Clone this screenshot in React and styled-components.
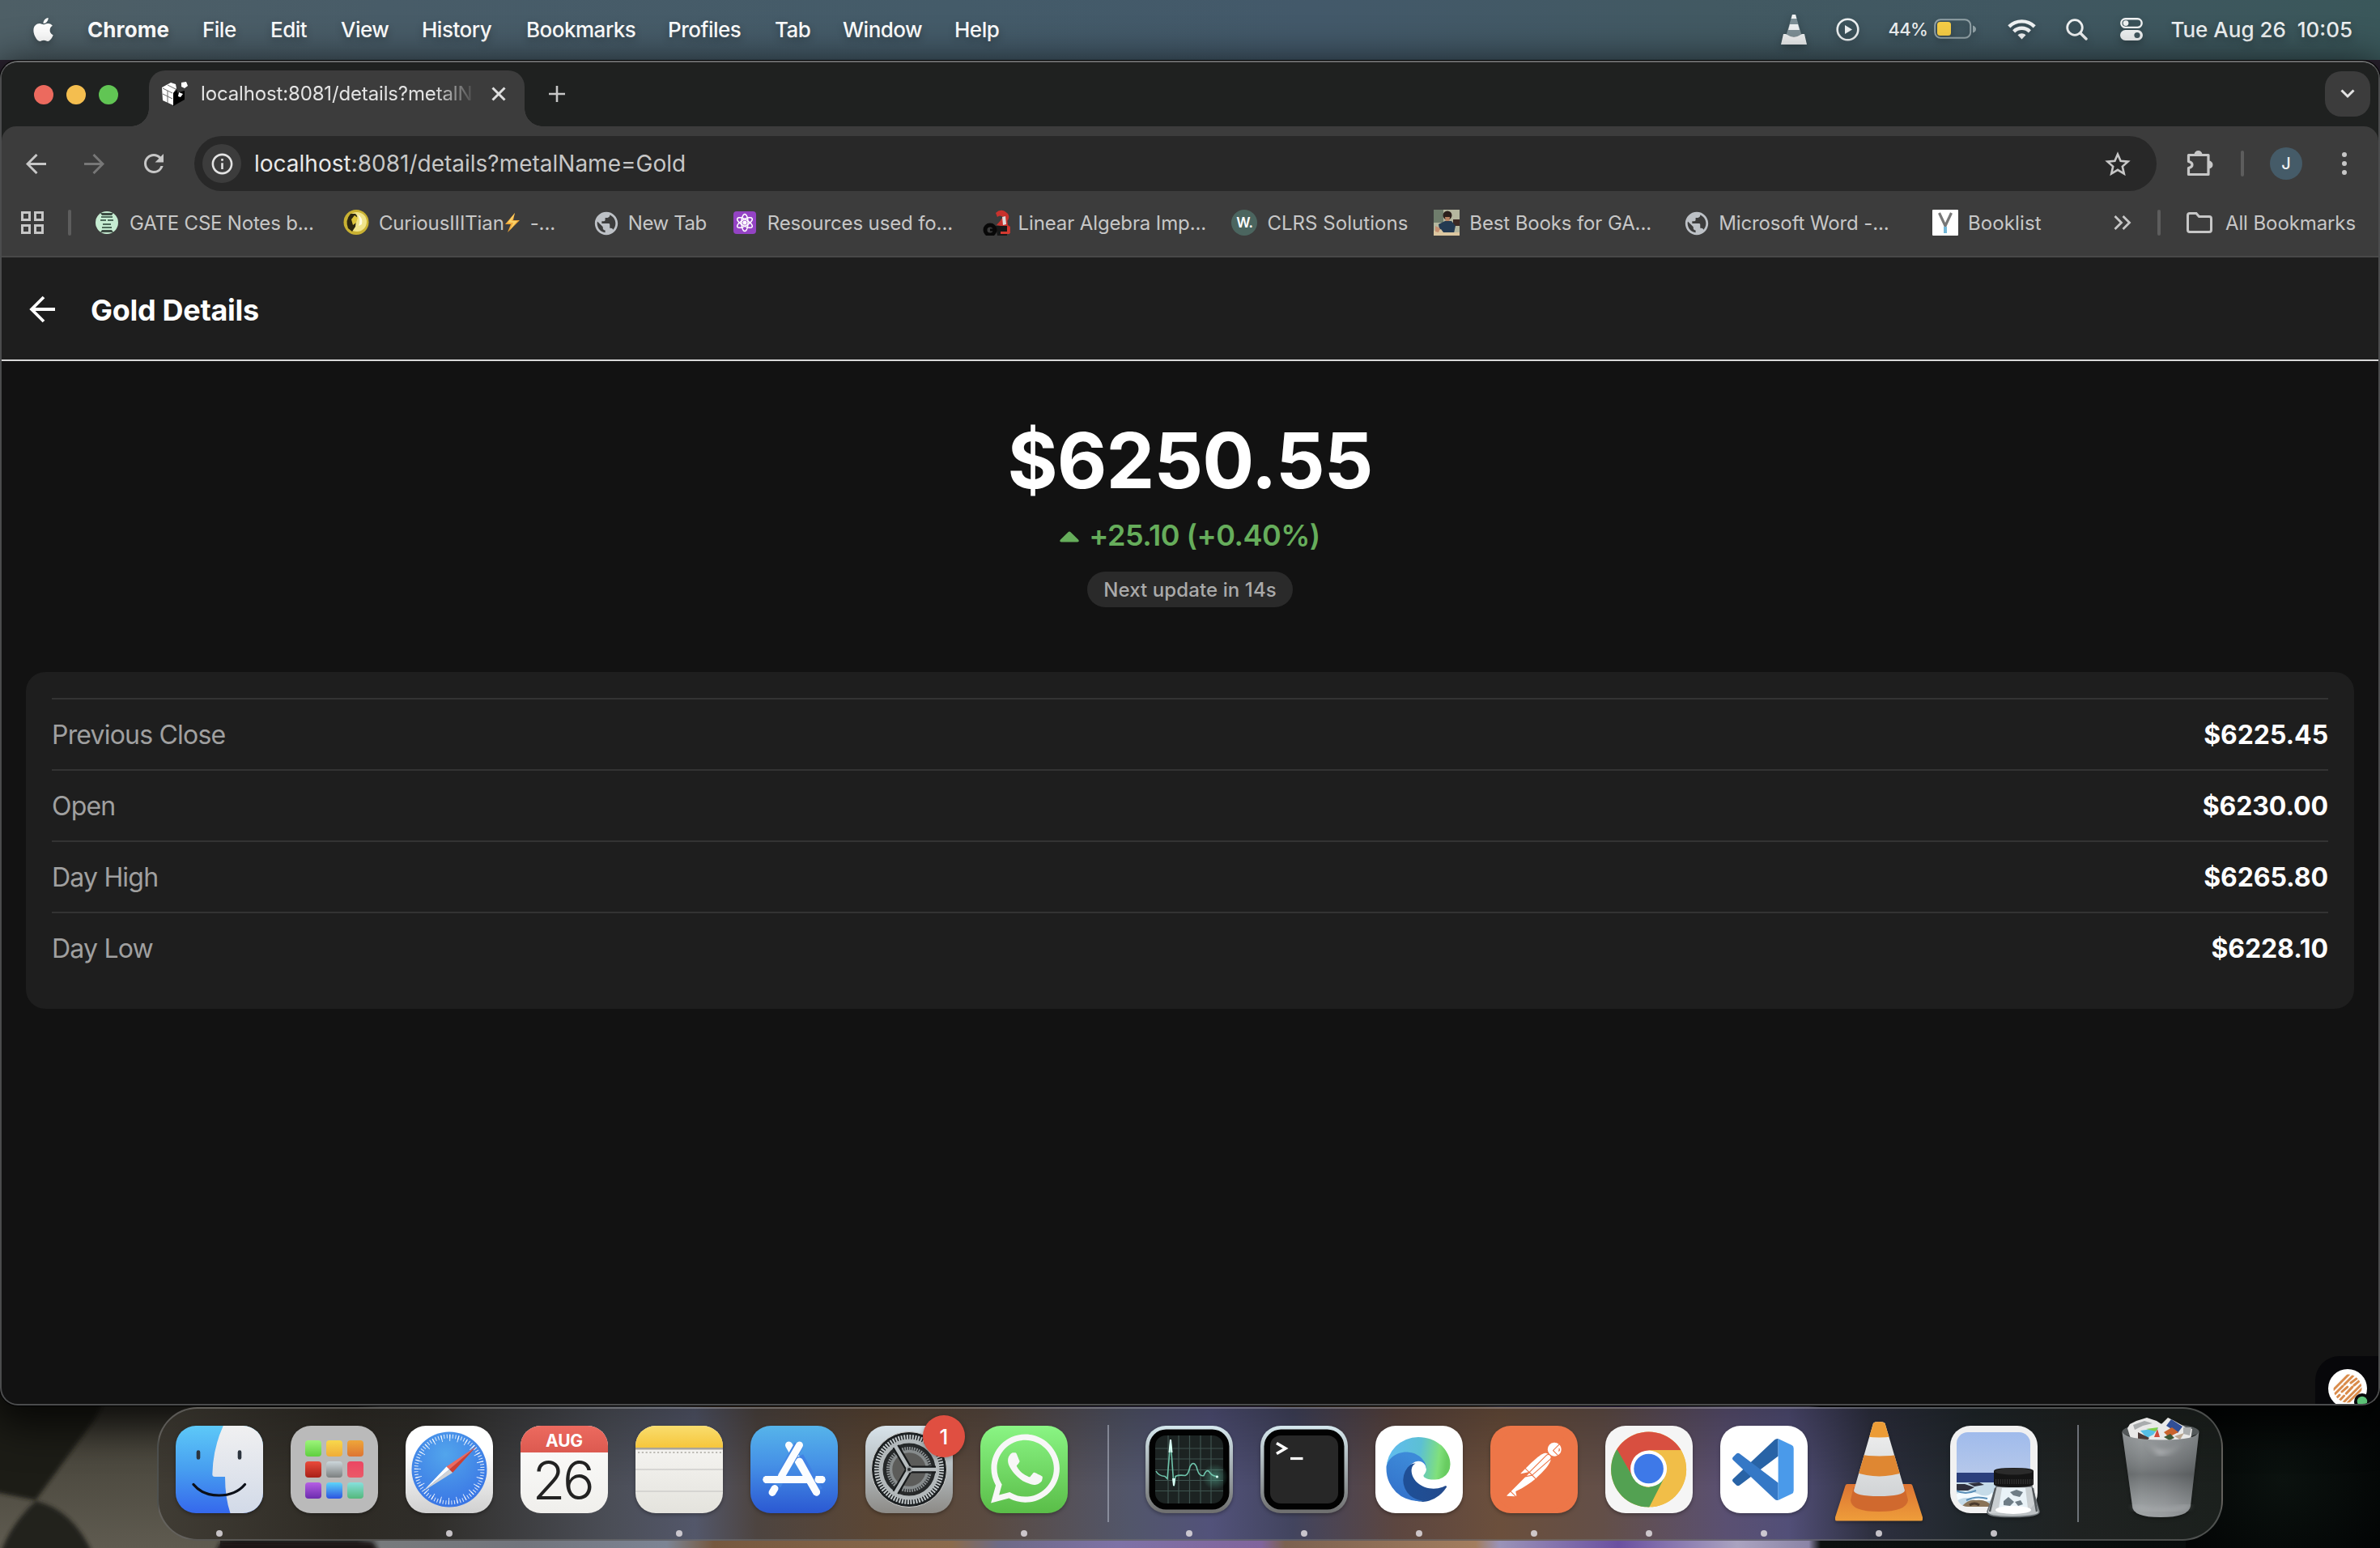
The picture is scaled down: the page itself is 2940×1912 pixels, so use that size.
import React from "react";
import styled, { createGlobalStyle } from "styled-components";
import { FaApple, FaWhatsapp } from "react-icons/fa";
import { MdPublic, MdRefresh, MdInfoOutline } from "react-icons/md";
import { SiPostman } from "react-icons/si";

const GlobalStyle = createGlobalStyle`
  * { box-sizing: border-box; }
  body {
    margin: 0;
    background: #000;
    font-family: Inter, "Liberation Sans", sans-serif;
    -webkit-font-smoothing: antialiased;
  }
  svg { display: block; flex: none; }
`;

/* ---------- desktop ---------- */

const Desktop = styled.div`
  position: relative;
  display: flex;
  flex-direction: column;
  width: 2940px;
  height: 1912px;
  overflow: hidden;
`;

const WallpaperSvg = styled.svg`
  position: absolute;
  inset: 0;
`;

/* ---------- menu bar ---------- */

const MenuBar = styled.header`
  position: relative;
  display: flex;
  align-items: center;
  height: 74px;
  padding: 0 34px 2px 37px;
  color: #fff;
  background: linear-gradient(90deg, #4e5f66 0%, #485c68 16%, #445b69 40%, #43596a 55%, #425962 72%, #405761 85%, #3a575a 100%);
  text-shadow: 0 4px 10px rgba(0, 0, 0, 0.3);
  svg { filter: drop-shadow(0 4px 5px rgba(0, 0, 0, 0.25)); }
`;

const AppleMark = styled.span`
  display: flex;
  width: 71px;
  font-size: 33px;
`;

const Menus = styled.nav`
  display: flex;
  flex: 1;
  font-size: 26px;
  font-weight: 500;
`;

const MenuItem = styled.span`
  width: ${(p) => p.$w}px;
  font-weight: ${(p) => (p.$app ? 700 : 500)};
  letter-spacing: ${(p) => (p.$app ? 0.1 : -0.5)}px;
  white-space: nowrap;
`;

const StatusArea = styled.div`
  display: grid;
  grid-template-columns: 68px 64px 57px 91px 72px 67px 62px auto;
  align-items: center;
  color: #eef1f2;
`;

const BatteryText = styled.span`
  font-size: 22px;
  font-weight: 500;
  letter-spacing: -0.7px;
`;

const Clock = styled.span`
  font-size: 26px;
  font-weight: 500;
  letter-spacing: 0;
  white-space: pre;
`;

/* ---------- browser window ---------- */

const Window = styled.section`
  position: relative;
  display: flex;
  flex-direction: column;
  height: 1661px;
  margin-top: 1px;
  border: 2px solid #4b4c4d;
  border-top-color: #68696a;
  border-radius: 22px;
  background: #121212;
  box-shadow: 0 0 0 1px #000, 0 14px 50px 10px rgba(0, 0, 0, 0.75);
  overflow: hidden;
`;

const TabStrip = styled.div`
  display: flex;
  align-items: center;
  height: 79px;
  padding: 0 10px 0 40px;
  background: #1f2120;
`;

const Lights = styled.div`
  display: flex;
  gap: 16px;
  width: 142px;
`;

const Light = styled.i`
  width: 24px;
  height: 24px;
  border-radius: 50%;
  background: ${(p) => p.$c};
`;

const Tab = styled.div`
  position: relative;
  display: flex;
  align-items: center;
  align-self: flex-end;
  width: 464px;
  height: 69px;
  padding: 0 20px 12px 16px;
  border-radius: 20px 20px 0 0;
  background: #3c3c3c;
  &::before, &::after {
    content: "";
    position: absolute;
    bottom: 0;
    width: 22px;
    height: 22px;
  }
  &::before {
    left: -22px;
    background: radial-gradient(circle at 0 0, transparent 21.5px, #3c3c3c 22px);
  }
  &::after {
    right: -22px;
    background: radial-gradient(circle at 100% 0, transparent 21.5px, #3c3c3c 22px);
  }
`;

const TabTitle = styled.span`
  width: 339px;
  margin: 0 20px 0 16px;
  color: #e3e3e3;
  font-size: 24px;
  letter-spacing: -0.15px;
  white-space: nowrap;
  mask-image: linear-gradient(90deg, #000 85%, rgba(0, 0, 0, 0.1) 99%);
`;

const NewTabButton = styled.button`
  display: flex;
  flex: 1;
  margin: 0;
  padding: 0 0 1px 30px;
  border: 0;
  background: none;
`;

const TabSearch = styled.button`
  display: grid;
  place-items: center;
  width: 56px;
  height: 56px;
  margin-bottom: 1px;
  padding: 0;
  border: 0;
  border-radius: 20px;
  background: #3c3c3c;
`;

const Chrome = styled.div`
  height: 162px;
  border-bottom: 2px solid #484848;
  border-radius: 18px 18px 0 0;
  background: #3c3c3c;
`;

const ChromeBack = styled.div`
  background: #1f2120;
`;

const Toolbar = styled.div`
  display: flex;
  align-items: center;
  height: 90px;
  padding: 2px 30px 0 26px;
`;

const NavButton = styled.span`
  display: grid;
  place-items: center;
  width: 72px;
  padding-right: ${(p) => p.$pull || 40}px;
  color: ${(p) => (p.$dim ? "#777" : "#c7c7c7")};
`;

const AddressBar = styled.div`
  display: flex;
  align-items: center;
  width: 2424px;
  height: 68px;
  margin: 0 36px 0 -4px;
  padding: 0 32px 0 10px;
  border-radius: 34px;
  background: #282828;
`;

const SiteInfo = styled.span`
  display: grid;
  place-items: center;
  width: 48px;
  height: 48px;
  border-radius: 50%;
  color: #e3e3e3;
  background: #3c3c3c;
  font-size: 31px;
`;

const Url = styled.span`
  flex: 1;
  margin-left: 16px;
  color: #c7c7c7;
  font-size: 28px;
  letter-spacing: 0;
  b { color: #e9e9e9; font-weight: 400; }
`;

const Separator = styled.i`
  width: 4px;
  height: 32px;
  border-radius: 2px;
  background: #5d5d5d;
  margin: ${(p) => p.$m || 0};
`;

const Avatar = styled.span`
  display: grid;
  place-items: center;
  width: 40px;
  height: 40px;
  margin: 0 49px 0 32px;
  border-radius: 50%;
  color: #f1f1f1;
  background: #455b68;
  font-size: 20px;
  font-weight: 500;
`;

const Dots = styled.span`
  display: grid;
  gap: 5px;
  i { width: 6px; height: 6px; border-radius: 50%; background: #c7c7c7; }
`;

const BookmarksBar = styled.div`
  display: flex;
  align-items: center;
  height: 60px;
  padding: 0 28px 2px 22px;
`;

const Bookmark = styled.span`
  display: flex;
  align-items: center;
  gap: 12px;
  width: ${(p) => p.$w}px;
  color: #c7c7c7;
  font-size: 24px;
  letter-spacing: ${(p) => p.$ls ?? -0.12}px;
  white-space: nowrap;
`;

const BookmarkText = styled.span`
  display: flex;
  align-items: center;
`;

const Tail = styled.span`
  margin-left: 12px;
`;

const Emblem = styled.span`
  display: grid;
  place-items: center;
  width: 32px;
  height: 32px;
  color: #bdc1c6;
  font-size: 34px;
`;

const Overflow = styled.span`
  display: flex;
  width: 54px;
`;

const AllBookmarks = styled.span`
  display: flex;
  align-items: center;
  gap: 16px;
  margin-left: 32px;
  color: #c7c7c7;
  font-size: 24px;
  letter-spacing: -0.1px;
  white-space: nowrap;
`;

/* ---------- page ---------- */

const PageHeader = styled.div`
  display: flex;
  align-items: center;
  height: 128px;
  padding: 2px 0 0 32px;
  border-bottom: 2px solid #d8d8d8;
  background: #1e1e1e;
`;

const PageTitle = styled.h1`
  margin: 2px 0 0 42px;
  color: #fff;
  font-size: 36px;
  font-weight: 700;
  letter-spacing: -0.3px;
`;

const Quote = styled.div`
  display: flex;
  flex-direction: column;
  align-items: center;
  padding-top: 65px;
`;

const Price = styled.div`
  color: #fff;
  font-size: 95px;
  font-weight: 700;
  line-height: 116px;
  letter-spacing: -0.9px;
`;

const Change = styled.div`
  display: flex;
  align-items: center;
  gap: 12px;
  margin-top: 12px;
  color: #66ad5b;
  font-size: 36px;
  font-weight: 600;
  line-height: 44px;
  letter-spacing: -0.5px;
  svg { margin-top: 3px; }
`;

const Countdown = styled.div`
  height: 44px;
  margin-top: 23px;
  padding: 1px 20px 0;
  border-radius: 22px;
  color: #aaa;
  background: #2a2a2a;
  font-size: 24px;
  font-weight: 500;
  line-height: 44px;
  letter-spacing: 0.1px;
`;

const Card = styled.div`
  margin: 80px 30px 0;
  padding: 32px;
  border-radius: 24px;
  background: #1e1e1e;
`;

const Row = styled.div`
  display: flex;
  align-items: center;
  justify-content: space-between;
  height: 88px;
  border-top: 2px solid #333;
  font-size: 32px;
`;

const Label = styled.span`
  color: #a0a0a0;
  letter-spacing: -0.8px;
`;

const Value = styled.span`
  color: #fff;
  font-weight: 700;
  letter-spacing: -0.1px;
`;

const DevBadge = styled.div`
  position: absolute;
  right: 0;
  bottom: 0;
  width: 78px;
  height: 59px;
  border-radius: 30px 0 0 0;
  background: #07070a;
  overflow: hidden;
`;

/* ---------- dock ---------- */

const Dock = styled.footer`
  position: relative;
  display: flex;
  align-items: flex-start;
  width: 2552px;
  height: 165px;
  margin: 2px 0 0 194px;
  padding: 21px 21px 0;
  border: 2px solid rgba(150, 150, 150, 0.42);
  border-radius: 50px;
  background:
    linear-gradient(180deg, rgba(0, 0, 0, 0.22), rgba(0, 0, 0, 0) 60%),
    linear-gradient(90deg, #403c34 0%, #2e2b25 9%, #2f2d29 13%, #4b4e57 22%, #53576a 26%, #4d4440 29%, #5b4634 35%, #5a4a40 40%, #52566a 47%, #52527a 51%, #42445e 55%, #5c4640 60%, #6b4f3c 65%, #634f48 70%, #5a5072 76%, #524f78 79%, #2e3040 83%, #20272b 88%, #1f2221 93%, #1b201d 100%);
`;

const DockItem = styled.div`
  position: relative;
  display: flex;
  flex: none;
  flex-direction: column;
  align-items: center;
  gap: 21px;
  width: 108px;
  margin-right: ${(p) => p.$after ?? 34}px;
  > svg { overflow: visible; filter: drop-shadow(0 2px 2px rgba(0, 0, 0, 0.3)); }
`;

const RunningDot = styled.i`
  width: 8px;
  height: 8px;
  border-radius: 50%;
  background: rgba(225, 220, 225, 0.85);
`;

const DockSeparator = styled.i`
  flex: none;
  width: 2px;
  height: 120px;
  margin: -1px ${(p) => p.$r}px 0 0;
  background: rgba(190, 195, 210, 0.5);
`;

const NoticeBadge = styled.span`
  position: absolute;
  top: -13px;
  left: 71px;
  display: grid;
  place-items: center;
  width: 52px;
  height: 52px;
  border-radius: 50%;
  color: #fff;
  background: #e04f41;
  box-shadow: 0 2px 6px rgba(0, 0, 0, 0.3);
  font-size: 26px;
  font-weight: 500;
`;

/* ---------- drawings ---------- */

const Wallpaper = () => (
  <WallpaperSvg width="2940" height="1912" viewBox="0 0 2940 1912">
    <defs>
      <linearGradient id="wall" x1="0" x2="1">
        <stop offset="0" stopColor="#57534a" /><stop offset=".08" stopColor="#3a3830" />
        <stop offset=".1" stopColor="#1d1c1a" /><stop offset=".15" stopColor="#2b2a2a" />
        <stop offset=".16" stopColor="#777a7c" /><stop offset=".22" stopColor="#71747c" />
        <stop offset=".28" stopColor="#7c8494" /><stop offset=".3" stopColor="#75583f" />
        <stop offset=".4" stopColor="#8a6a4c" /><stop offset=".42" stopColor="#6d6a86" />
        <stop offset=".47" stopColor="#7d72a6" /><stop offset=".53" stopColor="#80649c" />
        <stop offset=".54" stopColor="#7b6150" /><stop offset=".62" stopColor="#a27d5e" />
        <stop offset=".63" stopColor="#9a93b8" /><stop offset=".68" stopColor="#6a50a0" />
        <stop offset=".73" stopColor="#a9a3c0" /><stop offset=".76" stopColor="#8a84a6" />
        <stop offset=".765" stopColor="#0d1110" /><stop offset="1" stopColor="#060a0a" />
      </linearGradient>
      <linearGradient id="cloth" x1="0" x2="0" y1="0" y2="1">
        <stop offset="0" stopColor="#2a2822" /><stop offset=".5" stopColor="#4c493f" /><stop offset="1" stopColor="#5f5b50" />
      </linearGradient>
      <radialGradient id="felt" cx=".5" cy=".6" r=".6">
        <stop offset="0" stopColor="#0b120f" /><stop offset="1" stopColor="#030505" />
      </radialGradient>
      <filter id="soft"><feGaussianBlur stdDeviation="2.500" /></filter>
    </defs>
    <rect width="2940" height="1912" fill="#2b2330" />
    <rect x="0" y="1700" width="2940" height="212" fill="url(#wall)" />
    <rect x="0" y="1700" width="272" height="212" fill="url(#cloth)" />
    <g filter="url(#soft)">
      <path d="M-10 1690H150L118 1752 90 1790 44 1853-10 1842Z" fill="#1f1e19" />
      <path d="M44 1854Q90 1864 115 1920H0Q12 1884 44 1854Z" fill="#23221c" />
      <path d="M272 1905H460L470 1920H265Z" fill="#1a1918" />
    </g>
    <rect x="2700" y="1700" width="240" height="212" fill="url(#felt)" />
  </WallpaperSvg>
);

const MenuCone = () => (
  <svg width="32" height="37" viewBox="0 0 32 37">
    <path d="M14 0h4l8 27H6Z" fill="#7d8f96" />
    <path d="M14 0h4l1.4 5h-6.8ZM11 12h10l2 7H9ZM3 24h3q10 7 20 0h3l3 13H0Z" fill="#f0f2f3" />
  </svg>
);

const PlayCircle = () => (
  <svg width="29" height="29" viewBox="0 0 29 29">
    <circle cx="14.500" cy="14.500" r="12.800" fill="none" stroke="#eef1f2" strokeWidth="2.600" />
    <path d="M11 9v11l9-5.500Z" fill="#eef1f2" />
  </svg>
);

const Battery = () => (
  <svg width="52" height="26" viewBox="0 0 52 26">
    <rect x="1.200" y="1.200" width="44" height="22.600" rx="7" fill="none" stroke="#93a3a8" strokeWidth="2" />
    <path d="M48 8.500q4 1.500 4 4.500t-4 4.500Z" fill="#93a3a8" />
    <rect x="4" y="4" width="17" height="17" rx="3.500" fill="#f7ce46" />
  </svg>
);

const Wifi = () => (
  <svg width="35" height="26" viewBox="0 0 35 26" fill="none" stroke="#f0f2f3" strokeWidth="4.400">
    <path d="M1.800 9.800a22.500 22.500 0 0 1 31.400 0" />
    <path d="M7.600 15.800a14.200 14.200 0 0 1 19.800 0" />
    <path d="M17.500 25.500l-5-5.200a7 7 0 0 1 10 0Z" fill="#f0f2f3" stroke="none" />
  </svg>
);

const Search = () => (
  <svg width="27" height="27" viewBox="0 0 27 27" fill="none" stroke="#f0f2f3" strokeWidth="2.800" strokeLinecap="round">
    <circle cx="11" cy="11" r="9.300" /><path d="M18 18l7 7" strokeWidth="3.400" />
  </svg>
);

const ControlCenter = () => (
  <svg width="28" height="28" viewBox="0 0 28 28">
    <rect x="1.300" y="1.300" width="25.400" height="10.600" rx="5.300" fill="none" stroke="#f0f2f3" strokeWidth="2.400" />
    <circle cx="7" cy="6.600" r="3.400" fill="#f0f2f3" />
    <rect x="0" y="15" width="28" height="13" rx="6.500" fill="#f0f2f3" />
    <circle cx="21" cy="21.500" r="3.600" fill="#42575f" />
  </svg>
);

const CubeFavicon = () => (
  <svg width="32" height="32" viewBox="0 0 32 32">
    <path d="M14 16l14-4v11L14 31Z" fill="#000" />
    <path d="M0 8l11-6 6 2 1 5-4 6v15L1 24Z" fill="#fff" />
    <path d="M1 9l12 6M7 5l10 5M1 16l12 6M7 12v15" stroke="#666" strokeWidth="1" fill="none" />
    <path d="M14 15l5-4v4l4 1v5l-5 2v4l-4 3Z" fill="#000" />
    <path d="M21 14l5 2-3 4-3-1Z" fill="#fff" />
    <path d="M24 2l6-1 2 5-4 3-4-2Z" fill="#fff" />
  </svg>
);

const Arrow = ({ flip }) => (
  <svg width="25" height="25" viewBox="0 0 25 25" fill="none" stroke="currentColor" strokeWidth="3"
    transform={flip ? "scale(-1 1)" : undefined}>
    <path d="M25 12.500H2M13.500 1L2 12.500 13.500 24" />
  </svg>
);

const Star = () => (
  <svg width="32" height="30" viewBox="0 0 32 30" fill="none" stroke="#c7c7c7" strokeWidth="2.600">
    <path d="M16 3.500l3.600 8.300 9 .8-6.800 6 2 8.900-7.800-4.700-7.800 4.700 2-8.900-6.800-6 9-.8Z" />
  </svg>
);

const Puzzle = () => (
  <svg width="34" height="34" viewBox="0 0 34 34">
    <path d="M3.500 6.500H28V30.500H3.500V22.500Q8 21.500 8 18.500T3.500 14.500Z" fill="none" stroke="#c7c7c7" strokeWidth="3.200" strokeLinejoin="round" />
    <path d="M10.500 6a5 5 0 0 1 10 0ZM28.500 13.500a5 5 0 0 1 0 10Z" fill="#c7c7c7" />
  </svg>
);

const AppsGrid = () => (
  <svg width="32" height="32" viewBox="0 0 32 32" fill="none" stroke="#c7c7c7" strokeWidth="3">
    <rect x="3.500" y="3.500" width="9" height="9" /><rect x="19.500" y="3.500" width="9" height="9" />
    <rect x="3.500" y="19.500" width="9" height="9" /><rect x="19.500" y="19.500" width="9" height="9" />
  </svg>
);

const GateIcon = () => (
  <svg width="30" height="32" viewBox="0 0 30 32">
    <circle cx="15" cy="16" r="14" fill="#c6ecd2" />
    <path d="M7 4h16l-2 3H9ZM7 28h16l-2-3H9Z" fill="#3c4b42" />
    <path d="M8 9h14M7 13h7M16 13h7M10 18h10M9 22h12" stroke="#4d6a5a" strokeWidth="2.200" />
  </svg>
);

const CoinIcon = () => (
  <svg width="32" height="32" viewBox="0 0 32 32">
    <circle cx="16" cy="15.500" r="15.500" fill="#c9b132" /><circle cx="17" cy="15" r="12" fill="#f0e48a" />
    <path d="M9 5q-7 8-3 18l5 4 4-6 1-8q3-5-1-8Z" fill="#2c2710" />
    <path d="M10 12l4-5 4 3-2 6-4 3Z" fill="#ddc43a" /><path d="M18 6q7 4 5 12l-4 2q3-7-1-14Z" fill="#fffbe0" />
  </svg>
);

const AtomIcon = () => (
  <svg width="28" height="28" viewBox="0 0 28 28" fill="none" stroke="#fff" strokeWidth="1.500">
    <rect width="28" height="28" rx="4" fill="#9443c4" stroke="none" />
    <ellipse cx="14" cy="14" rx="10.500" ry="4" transform="rotate(90 14 14)" />
    <ellipse cx="14" cy="14" rx="10.500" ry="4" transform="rotate(30 14 14)" />
    <ellipse cx="14" cy="14" rx="10.500" ry="4" transform="rotate(150 14 14)" /><circle cx="14" cy="14" r="1.800" fill="#fff" />
  </svg>
);

const GearheadIcon = () => (
  <svg width="34" height="32" viewBox="0 0 34 32">
    <path d="M16 4q7-7 15 1 3 5-1 9l-4 3-4-4 3-4q-4-3-7 0Z" fill="#c8322d" />
    <path d="M17 19l8-9 5 1 1 8 3 2v8l-4 1-2-9Z" fill="#c8322d" />
    <path d="M24 9l4-1 1 10-4 1Z" fill="#ddd" />
    <path d="M16 20h14v12H18Z" fill="#181818" /><circle cx="9" cy="25" r="6" fill="none" stroke="#080808" strokeWidth="5" />
    <path d="M9 25h6" stroke="#080808" strokeWidth="3" /><path d="M22 30h11v-8h-3v5h-8Z" fill="#d23a30" />
  </svg>
);

const WordsMark = styled.span`
  display: grid;
  place-items: center;
  width: 32px;
  height: 32px;
  border-radius: 50%;
  color: #fff;
  background: #4b655f;
  font-size: 17px;
  font-weight: 600;
  letter-spacing: -0.5px;
`;

const PortraitIcon = () => (
  <svg width="32" height="32" viewBox="0 0 32 32">
    <rect width="32" height="32" fill="#b5b79f" /><path d="M0 0h12v16H0Z" fill="#6f7d6c" /><path d="M24 12h8v8h-8Z" fill="#3c2a25" />
    <circle cx="17" cy="7" r="5.500" fill="#2b1f1b" /><path d="M14 9h6l-1 8h-4Z" fill="#b98362" />
    <path d="M6 18l8-4h8l5 6-2 9H8Z" fill="#243a52" /><path d="M0 26l9-2 3 4h20v4H0Z" fill="#dcc7a0" /><path d="M2 20l6 3-2 5-4-1Z" fill="#c58f70" />
  </svg>
);

const BooklistIcon = () => (
  <svg width="32" height="32" viewBox="0 0 32 32">
    <rect width="32" height="32" rx="1" fill="#fff" />
    <path d="M8.500 4l7.500 16 7.500-16" fill="none" stroke="#777" strokeWidth="3.200" /><path d="M14 21h4v8h-4Z" fill="#72b7d8" />
  </svg>
);

const FolderIcon = () => (
  <svg width="32" height="26" viewBox="0 0 32 26">
    <path d="M1.500 22V4q0-2.500 2.500-2.500h8L15.500 5.500H28q2.500 0 2.500 2.500v14q0 2.500-2.500 2.500H4Q1.500 24.500 1.500 22Z" fill="none" stroke="#c7c7c7" strokeWidth="3" />
  </svg>
);

const Bolt = () => (
  <svg width="20" height="24" viewBox="0 0 20 24">
    <path d="M13 0L1 14h7L4 24 19 9h-8Z" fill="#f0a83a" /><path d="M13 0L4 12h7l-4 9 9-11h-7Z" fill="#fbd267" />
  </svg>
);

const Stripes = () => (
  <svg width="78" height="59" viewBox="0 0 78 59">
    <defs><clipPath id="disc"><circle cx="40" cy="40" r="17.500" /></clipPath></defs>
    <circle cx="40" cy="40" r="24" fill="#fff" />
    <g clipPath="url(#disc)" stroke="#d98b4b" strokeWidth="3" strokeLinecap="round">
      <path d="M22 42L42 22M23 48L34 37M36 35L48 23" />
      <path d="M24 54L30 48M33 44L42 36M44 33L56 24" strokeDasharray="9 4" />
      <path d="M28 57L46 38M48 36L60 26" strokeDasharray="11 4" />
      <path d="M34 58L58 34M40 58L60 38" />
    </g>
    <circle cx="58" cy="56" r="10" fill="#07070a" /><circle cx="58" cy="56" r="6.200" fill="#5cc176" />
  </svg>
);

/* ---------- dock icons ---------- */

const Tile = ({ children }) => (
  <svg width="108" height="108" viewBox="0 0 108 108">{children}</svg>
);

const Finder = () => (
  <Tile>
    <defs>
      <linearGradient id="fb" x2="0" y2="1"><stop stopColor="#5dc9f8" /><stop offset=".5" stopColor="#479ef0" /><stop offset="1" stopColor="#3568ec" /></linearGradient>
      <linearGradient id="fw" x2="0" y2="1"><stop stopColor="#f0f0f1" /><stop offset="1" stopColor="#d2dae8" /></linearGradient>
      <clipPath id="sq"><rect width="108" height="108" rx="25" /></clipPath>
    </defs>
    <g clipPath="url(#sq)">
      <rect width="108" height="108" fill="url(#fb)" />
      <path d="M58.800 0Q46 28 45.300 60q0 3 3 3H61q0 26 6.500 45H108V0Z" fill="url(#fw)" />
      <path d="M28 32.500v7M79 32.500v7" stroke="#2c343e" strokeWidth="4.600" strokeLinecap="round" />
      <path d="M22 72.500Q33 86 53.500 86T85.500 72.500" fill="none" stroke="#0b0f18" strokeWidth="3.200" strokeLinecap="round" />
    </g>
  </Tile>
);

const LAUNCH = [
  ["#9cf47a", "#5fcf3e"], ["#f8d84c", "#f0ac38"], ["#eea63a", "#dd7432"],
  ["#ea4a3a", "#a82018"], ["#ccd6da", "#7c8080"], ["#ec4662", "#ea5a68"],
  ["#b55ee4", "#6c2cae"], ["#5cd4fa", "#2c54e0"], ["#86e0dc", "#54b87c"],
];

const Launchpad = () => (
  <Tile>
    <rect width="108" height="108" rx="25" fill="#bababa" />
    {LAUNCH.map(([a, b], i) => (
      <g key={a}>
        <defs><linearGradient id={"lp" + i} x2="0" y2="1"><stop stopColor={a} /><stop offset="1" stopColor={b} /></linearGradient></defs>
        <rect x={18 + (i % 3) * 26} y={18 + Math.floor(i / 3) * 26} width="20" height="20" rx="4" fill={`url(#lp${i})`} />
      </g>
    ))}
  </Tile>
);

const Safari = () => (
  <Tile>
    <defs>
      <linearGradient id="sw" x2="0" y2="1"><stop offset=".3" stopColor="#fff" /><stop offset="1" stopColor="#d0d0d0" /></linearGradient>
      <radialGradient id="sb" cx=".45" cy=".3" r=".75"><stop stopColor="#52a5ec" /><stop offset="1" stopColor="#3872e4" /></radialGradient>
    </defs>
    <rect width="108" height="108" rx="25" fill="url(#sw)" />
    <circle cx="54" cy="54" r="46.500" fill="url(#sb)" />
    <circle cx="54" cy="54" r="41" fill="none" stroke="#fff" strokeOpacity=".85" strokeWidth="5" strokeDasharray="1 2.578" />
    <circle cx="54" cy="54" r="39" fill="none" stroke="#fff" strokeOpacity=".85" strokeWidth="8" strokeDasharray="1 9.210" />
    <path d="M87.500 25.500L50.500 50.500 54 54Z" fill="#ee6a5e" /><path d="M87.500 25.500L58 58 54 54Z" fill="#cf3f32" />
    <path d="M21.500 81L50.500 50.500 54 54Z" fill="#fff" /><path d="M21.500 81L58 58 54 54Z" fill="#cfd2d6" />
  </Tile>
);

const CalendarTile = styled.div`
  width: 108px;
  height: 108px;
  border-radius: 25px;
  overflow: hidden;
  background: linear-gradient(#fdfdfc, #f0efec);
  text-align: center;
`;

const Month = styled.div`
  height: 33px;
  padding-top: 3px;
  color: #fff;
  background: linear-gradient(#ec6a5f, #dc5a50);
  font-size: 21px;
  font-weight: 700;
  line-height: 31px;
  letter-spacing: -0.2px;
`;

const Day = styled.div`
  color: #222;
  font-size: 66px;
  font-weight: 300;
  line-height: 68px;
  letter-spacing: -3.4px;
  text-indent: -5px;
`;

const Calendar = () => (
  <CalendarTile><Month>AUG</Month><Day>26</Day></CalendarTile>
);

const Notes = () => (
  <Tile>
    <defs>
      <linearGradient id="ny" x2="0" y2="1"><stop stopColor="#f9dd6e" /><stop offset="1" stopColor="#f6c63c" /></linearGradient>
      <linearGradient id="nw" x2="0" y2="1"><stop stopColor="#faf9f7" /><stop offset="1" stopColor="#e4e3dd" /></linearGradient>
    </defs>
    <g clipPath="url(#sq)">
      <rect width="108" height="108" fill="url(#nw)" /><rect width="108" height="27" fill="url(#ny)" />
      <rect y="27" width="108" height="2.500" fill="#aaa599" />
      <path d="M3 33H108" stroke="#bdbbb5" strokeWidth="2.200" strokeDasharray="2.200 2.600" />
      <path d="M0 54H108M0 81H108" stroke="#cfcecb" strokeWidth="1.600" />
    </g>
  </Tile>
);

const AppStore = () => (
  <Tile>
    <defs><linearGradient id="as" x2="0" y2="1"><stop stopColor="#56b4ea" /><stop offset=".45" stopColor="#4590e6" /><stop offset="1" stopColor="#2b58d2" /></linearGradient></defs>
    <rect width="108" height="108" rx="25" fill="url(#as)" />
    <g fill="none" stroke="#fbfdff" strokeWidth="9" strokeLinecap="round">
      <path d="M47.500 24L81.500 82" />
      <path d="M20 66.500H88" />
      <path d="M60 23.500L32 73" stroke="#4488e4" strokeWidth="12" strokeLinecap="butt" />
      <path d="M60 38L84 80" stroke="#4182e4" strokeWidth="11.500" strokeLinecap="butt" />
      <path d="M60.500 44L81.500 82" /><path d="M20 66.500H60" /><path d="M84 66.500H88" />
      <path d="M60.500 24L38.500 62" /><path d="M30 77.500L27 82.500" />
    </g>
  </Tile>
);

const Settings = () => (
  <Tile>
    <defs><linearGradient id="sg" x2="0" y2="1"><stop stopColor="#d8e3ea" /><stop offset=".5" stopColor="#b4bbbe" /><stop offset="1" stopColor="#8c8a86" /></linearGradient></defs>
    <rect width="108" height="108" rx="25" fill="url(#sg)" />
    <circle cx="54" cy="54" r="46.500" fill="#1c2022" stroke="#d0d0ce" strokeWidth="1" />
    <circle cx="54" cy="54" r="39.500" fill="none" stroke="#c2c8ca" strokeWidth="7" strokeDasharray="2 1.447" />
    <circle cx="54" cy="54" r="35" fill="#26292a" stroke="#b2b8ba" strokeWidth="5" />
    <circle cx="54" cy="54" r="26" fill="none" stroke="#8a8f91" strokeWidth="4" strokeDasharray="1.800 1.170" />
    <circle cx="54" cy="54" r="22.500" fill="#5c5c5a" stroke="#878c8d" strokeWidth="3.500" />
    <path d="M54 54H87M54 54L37.500 25.500M54 54L37.500 82.500" stroke="#16191a" strokeWidth="9" />
    <path d="M54 54H88M54 54L37 25M54 54L37 83" stroke="#b6bcbe" strokeWidth="4.500" />
    <circle cx="54" cy="54" r="4" fill="#9ba0a2" /><circle cx="54" cy="54" r="2" fill="#26292a" />
  </Tile>
);

const WhatsApp = () => (
  <Tile>
    <defs><linearGradient id="wg" x2="0" y2="1"><stop stopColor="#8af584" /><stop offset="1" stopColor="#5abd48" /></linearGradient></defs>
    <rect width="108" height="108" rx="25" fill="url(#wg)" />
    <FaWhatsapp x="7" y="4.500" size={97} color="#f7f7f7" />
  </Tile>
);

const Bezel = ({ id, screen, children }) => (
  <Tile>
    <defs><linearGradient id={id} x2="0" y2="1"><stop stopColor="#d6e8ee" /><stop offset="1" stopColor="#6e6e6e" /></linearGradient></defs>
    <rect width="108" height="108" rx="25" fill={`url(#${id})`} />
    <rect x="4.500" y="4.500" width="99" height="99" rx="21" fill="#020202" />
    <rect x="12" y="12" width="84" height="84" rx="13" fill={screen} />
    {children}
  </Tile>
);

const ActivityMonitor = () => (
  <Bezel id="bz1" screen="#1c2322">
    <defs><radialGradient id="glow"><stop stopColor="#56a890" stopOpacity=".6" /><stop offset="1" stopColor="#56a890" stopOpacity="0" /></radialGradient></defs>
    <path d="M12 28H96M12 41H96M12 54.500H96M12 67.500H96M12 80.500H96M28 12V96M41 12V96M54.500 12V96M68 12V96M81 12V96" stroke="#7fb0a2" strokeOpacity=".35" strokeWidth="1.200" />
    <circle cx="86" cy="63" r="16" fill="url(#glow)" />
    <path d="M13 56q3 6 11 6.500l3 3 4-47 4 56 2-12q4-2 12-1 4-1 6-11 4-8 8 0 3 13 9 11 4-10 8-3 3 4 9 4" fill="none" stroke="#6fc4ab" strokeWidth="1.600" />
    <path d="M29.500 33L31 17l1.500 16M34 65l1 9 1-9" fill="none" stroke="#d9fff4" strokeWidth="2" /><circle cx="88.500" cy="63" r="1.600" fill="#d9fff4" />
  </Bezel>
);

const Terminal = () => (
  <Bezel id="bz2" screen="#272727">
    <path d="M20 21.500L31 28 20 34.500" fill="none" stroke="#fff" strokeWidth="3.600" /><path d="M37 40.500H52.500" stroke="#fff" strokeWidth="3.200" />
  </Bezel>
);

const Edge = () => (
  <Tile>
    <defs>
      <linearGradient id="e1" x1="100" y1="177" x2="240" y2="177" gradientUnits="userSpaceOnUse"><stop stopColor="#1f4f96" /><stop offset="1" stopColor="#234a8c" /></linearGradient>
      <linearGradient id="e2" x1="120" y1="90" x2="50" y2="230" gradientUnits="userSpaceOnUse"><stop stopColor="#3d8ad8" /><stop offset="1" stopColor="#3474cc" /></linearGradient>
      <linearGradient id="e3" x1="20" y1="80" x2="240" y2="110" gradientUnits="userSpaceOnUse"><stop stopColor="#60bcec" /><stop offset=".5" stopColor="#5cc0d4" /><stop offset=".85" stopColor="#80e07c" /><stop offset="1" stopColor="#68cc60" /></linearGradient>
    </defs>
    <rect width="108" height="108" rx="25" fill="#fff" />
    <g transform="translate(13.500 14) scale(.3086)">
      <path fill="url(#e1)" d="M235.680 195.460a93.730 93.730 0 0 1-10.540 4.710 101.870 101.870 0 0 1-35.900 6.460c-47.320 0-88.540-32.550-88.540-74.320a31.480 31.480 0 0 1 16.430-27.310c-42.800 1.800-53.800 46.400-53.800 72.530 0 73.880 68.090 81.370 82.760 81.370 7.910 0 19.840-2.300 27-4.560l1.310-.44a128.340 128.340 0 0 0 66.600-52.800 4 4 0 0 0-5.320-5.640z" />
      <path fill="url(#e2)" d="M105.730 241.420a79.200 79.200 0 0 1-22.740-21.340 80.720 80.720 0 0 1 29.530-120c3.120-1.470 8.450-4.130 15.540-4a32.350 32.350 0 0 1 25.690 13 31.880 31.880 0 0 1 6.360 18.660c0-.21 24.460-79.600-80-79.600-43.900 0-80 41.660-80 78.210a130.150 130.150 0 0 0 12.110 56 128 128 0 0 0 156.380 67.110 75.550 75.550 0 0 1-62.780-8z" />
      <path fill="url(#e3)" d="M152.330 148.860c-.81 1-3.300 2.500-3.300 5.660 0 2.610 1.700 5.120 4.720 7.230 14.380 10 41.490 8.680 41.560 8.680a59.560 59.560 0 0 0 30.270-8.350 61.380 61.380 0 0 0 30.430-52.880c.26-22.410-8-37.310-11.340-43.910C223.460 23.840 177.720 0 128 0A128 128 0 0 0 0 126.200c.48-36.540 36.800-66.050 80-66.050 3.500 0 23.460.34 42 10.070 16.340 8.580 24.900 18.940 30.850 29.210 6.180 10.670 7.280 24.150 7.280 29.520s-2.740 13.330-7.800 19.910z" />
    </g>
  </Tile>
);

const Postman = () => (
  <Tile>
    <g clipPath="url(#sq)">
      <rect width="108" height="108" fill="#ed7648" />
      <circle cx="53" cy="55.500" r="52" fill="#fff" />
      <SiPostman x="-2.500" y="0" size={111} color="#ed7648" />
    </g>
  </Tile>
);

const ChromeIcon = () => (
  <Tile>
    <defs><clipPath id="cc"><circle cx="53.600" cy="54" r="46.500" /></clipPath></defs>
    <rect width="108" height="108" rx="25" fill="#f5f5f5" />
    <g clipPath="url(#cc)">
      <rect width="108" height="108" fill="#f1be48" />
      <path d="M0 0H108V30.200H54L34.500 64 8 20Z" fill="#d84f40" />
      <path d="M15 30L34.500 64Q42 76 54 76L73 64 53.600 102 40 108H0V20Z" fill="#53a152" />
      <path d="M54 30.200H96L108 60V108H53.600L73 64Q80 46 54 30.200Z" fill="#f1be48" />
    </g>
    <circle cx="53.600" cy="53" r="22.500" fill="#fff" /><circle cx="53.600" cy="53" r="18.300" fill="#3e79e8" />
  </Tile>
);

const VSCode = () => (
  <Tile>
    <rect width="108" height="108" rx="25" fill="#fff" />
    <path d="M71.600 16V37.500L24 73.500Q22 75 20 73.500L16 69.500Q14 67.500 16 65.500L67 17.500Q69 15.500 71.600 16Z" fill="#2863a6" />
    <path d="M71.600 92V70.500L24 34.500Q22 33 20 34.500L16 38.500Q14 40.500 16 42.500L67 90.500Q69 92.500 71.600 92Z" fill="#3578c6" />
    <path d="M71.600 16L88.500 24Q90.700 25 90.700 28V80Q90.700 83 88.500 84L71.600 92Z" fill="#4a9aea" />
  </Tile>
);

const VLC = () => (
  <Tile>
    <defs>
      <linearGradient id="vb" x2="0" y2="1"><stop stopColor="#dd7433" /><stop offset="1" stopColor="#ee9d3a" /></linearGradient>
      <linearGradient id="vw" x2="0" y2="1"><stop stopColor="#f2f2f2" /><stop offset="1" stopColor="#cfd2d4" /></linearGradient>
      <clipPath id="cone"><path d="M47 -3q1-2 7-2t7.500 2L86 80Q84 87 54 87T23 80Z" /></clipPath>
    </defs>
    <path d="M15 72H93q2 0 2.500 2L108 113v3q0 1.500-2 1.500H2Q0 117.500 0 116v-3L12.500 74Q13 72 15 72Z" fill="url(#vb)" />
    <path d="M22.500 76L19 92Q20 106 54 106T90 92L86 76Z" fill="#d0692e" />
    <g clipPath="url(#cone)">
      <rect y="-8" width="108" height="100" fill="url(#vw)" />
      <path d="M30-10H80V12Q54 17 30 12Z" fill="#ec9c36" />
      <path d="M20 34Q54 41 90 34V56Q54 69 20 56Z" fill="#df8732" />
    </g>
  </Tile>
);

const Preview = () => (
  <Tile>
    <defs>
      <linearGradient id="sky" x2="0" y2="1"><stop stopColor="#9cb9ec" /><stop offset="1" stopColor="#b6c8ea" /></linearGradient>
      <clipPath id="photo"><rect x="8" y="8" width="91" height="92" rx="14" /></clipPath>
    </defs>
    <rect width="108" height="108" rx="25" fill="#f1f1f1" />
    <g clipPath="url(#photo)">
      <rect width="108" height="60" fill="url(#sky)" /><rect y="58" width="108" height="14" fill="#2b3f7c" />
      <rect y="70" width="108" height="40" fill="#c5dbe8" />
      <path d="M8 72h10l12 4-8 4H8ZM22 71l14-1 6 3-12 2Z" fill="#2e2f3c" />
      <path d="M8 84q14-6 26 0t18-2v10q-14 4-24-1t-20 2Z" fill="#f4fbff" /><path d="M8 80q10 6 24 0M20 92q12-6 26-2" stroke="#5a8fb8" strokeWidth="2" fill="none" />
      <path d="M12 102q10-12 20-10 14-2 22 10Z" fill="#8a7458" /><path d="M24 98q6-4 12 0" stroke="#4a3a2c" strokeWidth="3" fill="none" />
    </g>
    <path d="M57 75H101L110 106Q111 112 78 112.500T46 106Z" fill="#c9cdd0" fillOpacity=".93" stroke="#6e7478" strokeWidth="1.600" />
    <path d="M64 77H93L96 102Q80 96 60 102Z" fill="#eaf3f8" /><path d="M74 82l8-3 8 3-4 6-8-2ZM66 93l6-5 7 6-5 5-8-1ZM80 94l7-2 3 5-6 2Z" fill="#6f7d86" />
    <ellipse cx="78" cy="104" rx="22" ry="5" fill="#fff" />
    <path d="M56 77L49 106M102 77L107 106" stroke="#54595c" strokeWidth="2.400" />
    <path d="M54 56Q54 52 78.500 52T103 56V72Q103 76 78.500 76T54 72Z" fill="#151515" />
    <ellipse cx="78.500" cy="56.500" rx="23.500" ry="4" fill="#2b2b2b" /><path d="M56 69h46" stroke="#333" strokeWidth="6" strokeDasharray="1.200 1.600" />
  </Tile>
);

const Trash = () => (
  <Tile>
    <defs>
      <linearGradient id="tb" x2="1"><stop stopColor="#7d8284" /><stop offset=".25" stopColor="#8c9193" /><stop offset=".55" stopColor="#85898c" /><stop offset="1" stopColor="#6c7173" /></linearGradient>
      <linearGradient id="ts" x2="0" y2="1"><stop stopColor="#fff" stopOpacity=".12" /><stop offset=".5" stopColor="#000" stopOpacity=".2" /><stop offset=".9" stopColor="#fff" stopOpacity=".16" /></linearGradient>
      <filter id="mist"><feGaussianBlur stdDeviation="3" /></filter>
    </defs>
    <ellipse cx="54" cy="7" rx="47.500" ry="10" fill="#54595a" />
    <path d="M13 3l3-5 8-4 13-4 12 4 6 4 8-8 8 4 14 8 8 2-2 14-20 4-40 0-14-6Z" fill="#e9e9e8" />
    <path d="M20-1l14-5 10 3-12 3-10 5ZM82 2l10 0-2 10-8-2Z" fill="#a9acad" /><path d="M29 6l22-3-6 8-8 4Z" fill="#56bfe6" /><path d="M36 4l15-2-3 5Z" fill="#7fd04c" />
    <path d="M26 8l14 7-4 5-10-3Z" fill="#4b3a38" /><path d="M61 0l6-8 14 9-6 8Z" fill="#314f96" /><path d="M58 8l10-6 8 6-12 6Z" fill="#c9632c" /><path d="M46 14l4-10 3 10Z" fill="#cd4a3a" />
    <path d="M58 14l8-4 5 5-6 3Z" fill="#3d5634" /><path d="M71 13l12-4-5 8Z" fill="#b9a58f" />
    <path d="M6.300 7Q10 17 54 17.500T101.500 7L91 99Q89 113 54 113T19 99Z" fill="url(#tb)" />
    <path d="M6.300 7Q10 17 54 17.500T101.500 7L91 99Q89 113 54 113T19 99Z" fill="url(#ts)" />
    <path d="M38 22Q60 40 80 22 70 34 52 36Z" fill="#b9bcbe" filter="url(#mist)" />
    <path d="M20 99Q54 112 90 98" stroke="#a8abad" strokeWidth="6" fill="none" opacity=".6" filter="url(#mist)" />
  </Tile>
);

/* ---------- data ---------- */

const MENUS = [
  ["Chrome", 142], ["File", 84], ["Edit", 87], ["View", 100], ["History", 129], ["Bookmarks", 175],
  ["Profiles", 132], ["Tab", 84], ["Window", 138], ["Help", 60],
];

const BOOKMARKS = [
  { w: 308, icon: <GateIcon />, text: "GATE CSE Notes b...", ls: -0.2 },
  { w: 308, icon: <CoinIcon />, text: <>CuriousIIITian<Bolt /><Tail>-...</Tail></> },
  { w: 172, icon: <MdPublic />, text: "New Tab", ls: -0.4 },
  { w: 310, icon: <AtomIcon />, text: "Resources used fo..." },
  { w: 308, icon: <GearheadIcon />, text: "Linear Algebra Imp..." },
  { w: 250, icon: <WordsMark>W.</WordsMark>, text: "CLRS Solutions", ls: 0.05 },
  { w: 308, icon: <PortraitIcon />, text: "Best Books for GA..." },
  { w: 308, icon: <MdPublic />, text: "Microsoft Word -..." },
  { w: 224, icon: <BooklistIcon />, text: "Booklist", ls: 0.1 },
];

const ROWS = [
  ["Previous Close", "$6225.45"],
  ["Open", "$6230.00"],
  ["Day High", "$6265.80"],
  ["Day Low", "$6228.10"],
];

const DOCK_LEFT = [
  { Icon: Finder, on: true }, { Icon: Launchpad }, { Icon: Safari, on: true }, { Icon: Calendar },
  { Icon: Notes, on: true }, { Icon: AppStore }, { Icon: Settings, badge: "1" }, { Icon: WhatsApp, on: true, after: 49 },
];

const DOCK_RIGHT = [ActivityMonitor, Terminal, Edge, Postman, ChromeIcon, VSCode, VLC, Preview];

export default function App() {
  return (
    <Desktop>
      <GlobalStyle />
      <Wallpaper />
      <MenuBar>
        <AppleMark><FaApple /></AppleMark>
        <Menus>
          {MENUS.map(([name, w], i) => <MenuItem key={name} $w={w} $app={i === 0}>{name}</MenuItem>)}
        </Menus>
        <StatusArea>
          <MenuCone /><PlayCircle /><BatteryText>44%</BatteryText><Battery />
          <Wifi /><Search /><ControlCenter /><Clock>{"Tue Aug 26  10:05"}</Clock>
        </StatusArea>
      </MenuBar>

      <Window>
        <TabStrip>
          <Lights><Light $c="#ec6a5e" /><Light $c="#f4be4f" /><Light $c="#61c554" /></Lights>
          <Tab>
            <CubeFavicon />
            <TabTitle>localhost:8081/details?metalN</TabTitle>
            <svg width="18" height="18" viewBox="0 0 18 18" stroke="#dedede" strokeWidth="3"><path d="M1.500 1.500l15 15M16.500 1.500l-15 15" /></svg>
          </Tab>
          <NewTabButton>
            <svg width="20" height="20" viewBox="0 0 20 20" stroke="#c7c7c7" strokeWidth="2.600"><path d="M10 0v20M0 10h20" /></svg>
          </NewTabButton>
          <TabSearch>
            <svg width="18" height="12" viewBox="0 0 18 12" fill="none" stroke="#e3e3e3" strokeWidth="3"><path d="M1.500 1.500L9 9l7.500-7.500" /></svg>
          </TabSearch>
        </TabStrip>
        <ChromeBack>
          <Chrome>
            <Toolbar>
              <NavButton><Arrow /></NavButton>
              <NavButton $dim><Arrow flip /></NavButton>
              <NavButton $pull={42}><MdRefresh size={36} /></NavButton>
              <AddressBar>
                <SiteInfo><MdInfoOutline /></SiteInfo>
                <Url><b>localhost</b>:8081/details?metalName=Gold</Url>
                <Star />
              </AddressBar>
              <Puzzle />
              <Separator $m="0 0 0 34px" />
              <Avatar>J</Avatar>
              <Dots><i /><i /><i /></Dots>
            </Toolbar>
            <BookmarksBar>
              <AppsGrid />
              <Separator $m="0 28px 0 28px" />
              {BOOKMARKS.map((b, i) => (
                <Bookmark key={i} $w={b.w} $ls={b.ls}><Emblem>{b.icon}</Emblem><BookmarkText>{b.text}</BookmarkText></Bookmark>
              ))}
              <Overflow>
                <svg width="22" height="18" viewBox="0 0 22 18" fill="none" stroke="#c7c7c7" strokeWidth="2.800"><path d="M1.500 1l8 8-8 8M11.500 1l8 8-8 8" /></svg>
              </Overflow>
              <Separator />
              <AllBookmarks><FolderIcon />All Bookmarks</AllBookmarks>
            </BookmarksBar>
          </Chrome>
        </ChromeBack>

        <PageHeader>
          <svg width="36" height="36" viewBox="0 0 36 36" fill="none" stroke="#fff" strokeWidth="3.800"><path d="M34 18H5M20 3L5 18 20 33" /></svg>
          <PageTitle>Gold Details</PageTitle>
        </PageHeader>
        <Quote>
          <Price>$6250.55</Price>
          <Change>
            <svg width="24" height="14" viewBox="0 0 24 14"><path d="M2 13.500Q-1 13 1 10.500L10.500 1.200Q12-.3 13.500 1.200L23 10.500Q25 13 22 13.500Z" fill="#66ad5b" /></svg>
            +25.10 (+0.40%)
          </Change>
          <Countdown>Next update in 14s</Countdown>
        </Quote>
        <Card>
          {ROWS.map(([label, value]) => (
            <Row key={label}><Label>{label}</Label><Value>{value}</Value></Row>
          ))}
        </Card>
        <DevBadge><Stripes /></DevBadge>
      </Window>

      <Dock>
        {DOCK_LEFT.map(({ Icon, on, badge, after }, i) => (
          <DockItem key={i} $after={after}>
            <Icon />{on && <RunningDot />}{badge && <NoticeBadge>{badge}</NoticeBadge>}
          </DockItem>
        ))}
        <DockSeparator $r={45} />
        {DOCK_RIGHT.map((Icon, i) => (
          <DockItem key={i} $after={i === 7 ? 49 : 34}><Icon /><RunningDot /></DockItem>
        ))}
        <DockSeparator $r={47} />
        <DockItem $after={0}><Trash /></DockItem>
      </Dock>
    </Desktop>
  );
}
